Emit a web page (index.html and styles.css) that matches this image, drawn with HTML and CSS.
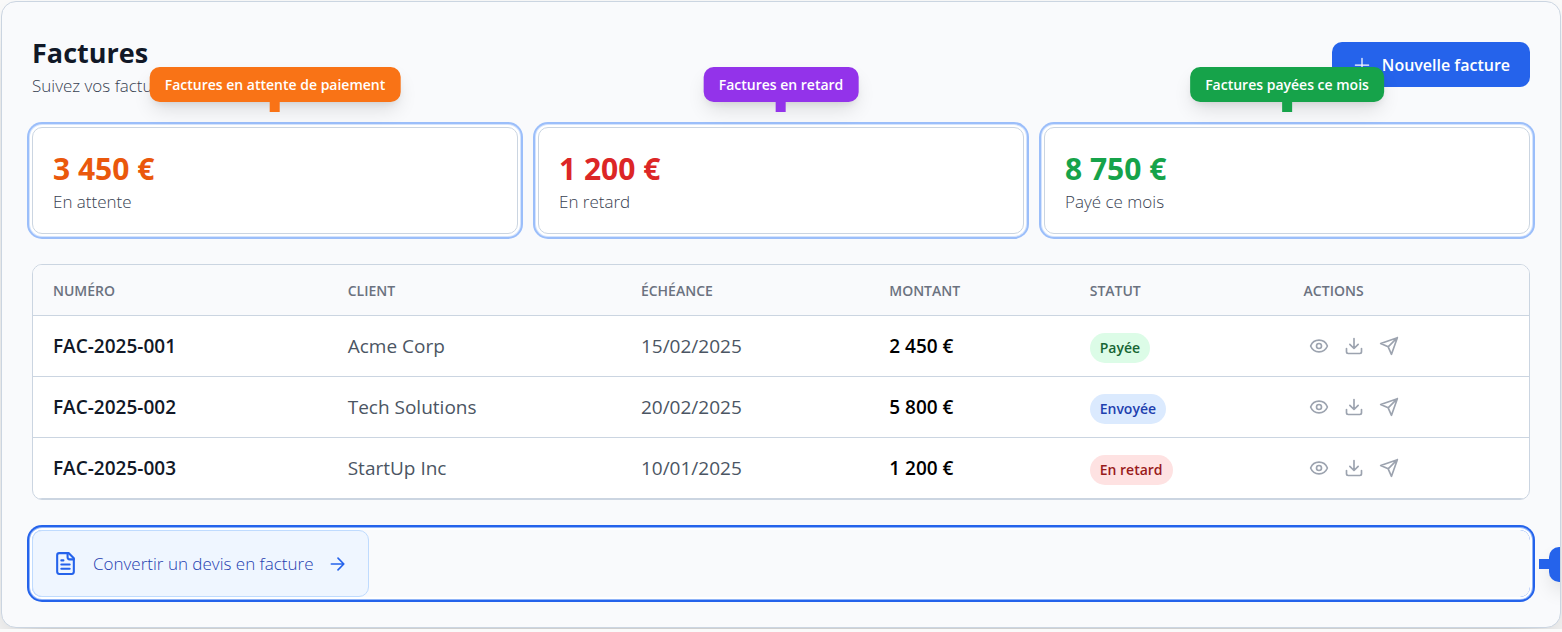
FILE: index.html
```html
<!DOCTYPE html>
<html lang="fr">
<head>
<meta charset="utf-8">
<meta name="viewport" content="width=device-width, initial-scale=1">
<title>Factures</title>
<link rel="stylesheet" href="styles.css">
</head>
<body>
<svg class="sprite" aria-hidden="true">
  <symbol id="plus" viewBox="0 0 24 24"><path d="M4 12h16M12 4v16"/></symbol>
  <symbol id="arrow" viewBox="0 0 24 24"><path d="M4 12h15m-7-7 7 7-7 7"/></symbol>
  <symbol id="file" viewBox="0 0 24 24"><path d="M15 2H6a2 2 0 0 0-2 2v16a2 2 0 0 0 2 2h12a2 2 0 0 0 2-2V7Z"/><path d="M14 2v4a2 2 0 0 0 2 2h4M10 9H8M16 13H8M16 17H8"/></symbol>
  <symbol id="eye" viewBox="0 0 24 24"><path d="M2.06 12.35a1 1 0 0 1 0-.7 10.75 10.75 0 0 1 19.88 0 1 1 0 0 1 0 .7 10.75 10.75 0 0 1-19.88 0"/><circle cx="12" cy="12" r="3"/></symbol>
  <symbol id="download" viewBox="0 0 24 24"><path d="M21 15v4a2 2 0 0 1-2 2H5a2 2 0 0 1-2-2v-4M7 10l5 5 5-5M12 15V3"/></symbol>
  <symbol id="send" viewBox="0 0 24 24"><path d="m22 2-7 20-4-9-9-4ZM22 2 11 13"/></symbol>
</svg>
<main class="panel">
  <header class="header">
    <div>
      <h1 class="title">Factures</h1>
      <p class="label">Suivez vos factures</p>
    </div>
    <button class="primary" type="button"><svg class="icon icon-thin"><use href="#plus"/></svg>Nouvelle facture</button>
  </header>

  <section class="stats">
    <div class="card ring">
      <div class="tip tip-orange">Factures en attente de paiement</div>
      <p class="amount amount-orange">3 450 €</p>
      <p class="label">En attente</p>
    </div>
    <div class="card ring">
      <div class="tip tip-purple">Factures en retard</div>
      <p class="amount amount-red">1 200 €</p>
      <p class="label">En retard</p>
    </div>
    <div class="card ring">
      <div class="tip tip-green">Factures payées ce mois</div>
      <p class="amount amount-green">8 750 €</p>
      <p class="label">Payé ce mois</p>
    </div>
  </section>

  <div class="table-box">
    <table class="table">
      <colgroup><col class="c-num"><col class="c-client"><col class="c-date"><col class="c-amount"><col class="c-status"><col></colgroup>
      <thead>
        <tr><th>NUMÉRO</th><th>CLIENT</th><th>ÉCHÉANCE</th><th>MONTANT</th><th>STATUT</th><th>ACTIONS</th></tr>
      </thead>
      <tbody>
        <tr>
          <td class="num">FAC-2025-001</td><td>Acme Corp</td><td>15/02/2025</td><td class="sum">2 450 €</td>
          <td class="status"><span class="badge paid">Payée</span></td>
          <td><div class="actions">
            <button type="button" aria-label="Voir"><svg class="icon"><use href="#eye"/></svg></button>
            <button type="button" aria-label="Télécharger"><svg class="icon"><use href="#download"/></svg></button>
            <button type="button" aria-label="Envoyer"><svg class="icon"><use href="#send"/></svg></button>
          </div></td>
        </tr>
        <tr>
          <td class="num">FAC-2025-002</td><td>Tech Solutions</td><td>20/02/2025</td><td class="sum">5 800 €</td>
          <td class="status"><span class="badge sent">Envoyée</span></td>
          <td><div class="actions">
            <button type="button" aria-label="Voir"><svg class="icon"><use href="#eye"/></svg></button>
            <button type="button" aria-label="Télécharger"><svg class="icon"><use href="#download"/></svg></button>
            <button type="button" aria-label="Envoyer"><svg class="icon"><use href="#send"/></svg></button>
          </div></td>
        </tr>
        <tr>
          <td class="num">FAC-2025-003</td><td>StartUp Inc</td><td>10/01/2025</td><td class="sum">1 200 €</td>
          <td class="status"><span class="badge late">En retard</span></td>
          <td><div class="actions">
            <button type="button" aria-label="Voir"><svg class="icon"><use href="#eye"/></svg></button>
            <button type="button" aria-label="Télécharger"><svg class="icon"><use href="#download"/></svg></button>
            <button type="button" aria-label="Envoyer"><svg class="icon"><use href="#send"/></svg></button>
          </div></td>
        </tr>
      </tbody>
    </table>
  </div>

  <div class="convert-row ring">
    <button class="convert" type="button"><svg class="icon icon-lg"><use href="#file"/></svg>Convertir un devis en facture<svg class="icon"><use href="#arrow"/></svg></button>
    <div class="side-tip"></div>
  </div>
</main>
</body>
</html>
```
FILE: styles.css
```css
* { box-sizing: border-box; }
body {
  margin: 0;
  padding: 1px;
  background: #fafafa;
  color: #111827;
  font-family: "Open Sans", "Noto Sans", sans-serif;
  font-size: 19px;
  overflow: hidden;
}
h1, p { margin: 0; }
button { font: inherit; border: 0; cursor: pointer; }
.sprite { position: absolute; width: 0; height: 0; }
.icon {
  width: 20px; height: 20px; flex: none; display: block;
  fill: none; stroke: currentColor; stroke-width: 2;
  stroke-linecap: round; stroke-linejoin: round;
}
.icon-lg { width: 25px; height: 25px; }
.icon-thin { stroke-width: 1.5; }

.panel {
  display: flex; flex-direction: column;
  padding: 30px;
  background: #f9fafc;
  border: 1px solid #cbd5e1;
  border-radius: 15px;
  box-shadow: 0 25px 50px -12px rgba(0, 0, 0, .25);
  overflow: hidden;
}
.header { display: flex; justify-content: space-between; align-items: center; margin-bottom: 30px; }
.title { font-size: 27px; line-height: 42px; font-weight: 700; }
.label { font-size: 17px; line-height: 23px; font-weight: 300; color: #374151; }
.primary {
  display: flex; align-items: center; gap: 10px;
  height: 45px; padding: 0 20px;
  background: #2563eb; color: #fff;
  border-radius: 10px;
  font-size: 16px; font-weight: 600;
}

.stats { display: grid; grid-template-columns: repeat(3, 1fr); gap: 20px; margin-bottom: 30px; }
.card {
  position: relative;
  padding: 20px;
  background: #fff;
  border: 1px solid #cbd5e1;
  border-radius: 10px;
}
.ring { box-shadow: 0 0 0 2px #fff, 0 0 0 3px #d5e4fd, 0 0 0 5px #9bbefa; }
.amount { font-size: 30px; line-height: 42px; font-weight: 700; }
.amount-orange { color: #ea580c; }
.amount-red { color: #dc2626; }
.amount-green { color: #16a34a; }

/* Callouts float above their card */
.tip {
  position: absolute; left: 50%; bottom: calc(100% + 26px);
  transform: translateX(-50%);
  padding: 0 15px;
  border-radius: 10px;
  color: #fff;
  font-size: 14px; line-height: 35px; font-weight: 600;
  white-space: nowrap;
  box-shadow: 0 10px 20px -3px rgba(0, 0, 0, .12), 0 4px 8px -4px rgba(0, 0, 0, .12);
}
.tip::after {
  content: ""; position: absolute; top: 100%; left: 50%;
  width: 10px; height: 10px; margin-left: -5px;
  background: inherit;
}
.tip-orange { background: #f97316; }
.tip-purple { background: #9333ea; }
.tip-green { background: #16a34a; }

.table-box { border: 1px solid #cbd5e1; border-radius: 10px; background: #fff; overflow: hidden; margin-bottom: 30px; }
.table { width: 100%; table-layout: fixed; border-collapse: separate; border-spacing: 0; }
.c-num { width: 19.7%; }
.c-client { width: 19.6%; }
.c-date { width: 16.6%; }
.c-amount { width: 13.4%; }
.c-status { width: 14.3%; }
.table th, .table td { padding: 0 20px; text-align: left; border-bottom: 1px solid #cbd5e1; }
.table th { height: 51px; background: #f9fafc; color: #6b7280; font-size: 14px; font-weight: 600; }
.table td { height: 61px; color: #4b5563; }
.table .num { color: #111827; font-weight: 600; }
.table .sum { color: #000; font-weight: 600; }
.table .status { padding-top: 4px; }
.badge {
  display: block; width: fit-content; padding: 0 10px;
  border-radius: 15px;
  font-size: 14px; line-height: 30px; font-weight: 600;
}
.paid { background: #dcfce7; color: #166534; }
.sent { background: #dbeafe; color: #1e40af; }
.late { background: #fee2e2; color: #991b1b; }
.actions { display: flex; gap: 5px; }
.actions button { padding: 5px; background: none; color: #9ca3af; }

.convert-row { position: relative; display: flex; border-radius: 10px; }
.convert-row.ring { box-shadow: 0 0 0 2px #fff, 0 0 0 3px #8fb3f8, 0 0 0 5px #2563eb; }
.convert {
  display: flex; align-items: center; gap: 15px;
  height: 67px; padding: 0 20px;
  background: #eff6ff; color: #1e40af;
  border: 1px solid #bfdbfe; border-radius: 10px;
  font-size: 17px; font-weight: 300;
}
.convert .icon { color: #2563eb; }
.side-tip {
  position: absolute; left: calc(100% + 19px); top: 50%;
  width: 200px; height: 35px; margin-top: -17px;
  background: #2563eb; border-radius: 10px;
  box-shadow: 0 10px 20px -3px rgba(0, 0, 0, .12);
}
.side-tip::before {
  content: ""; position: absolute; right: 100%; top: 12px;
  width: 10px; height: 10px;
  background: inherit;
}
```
